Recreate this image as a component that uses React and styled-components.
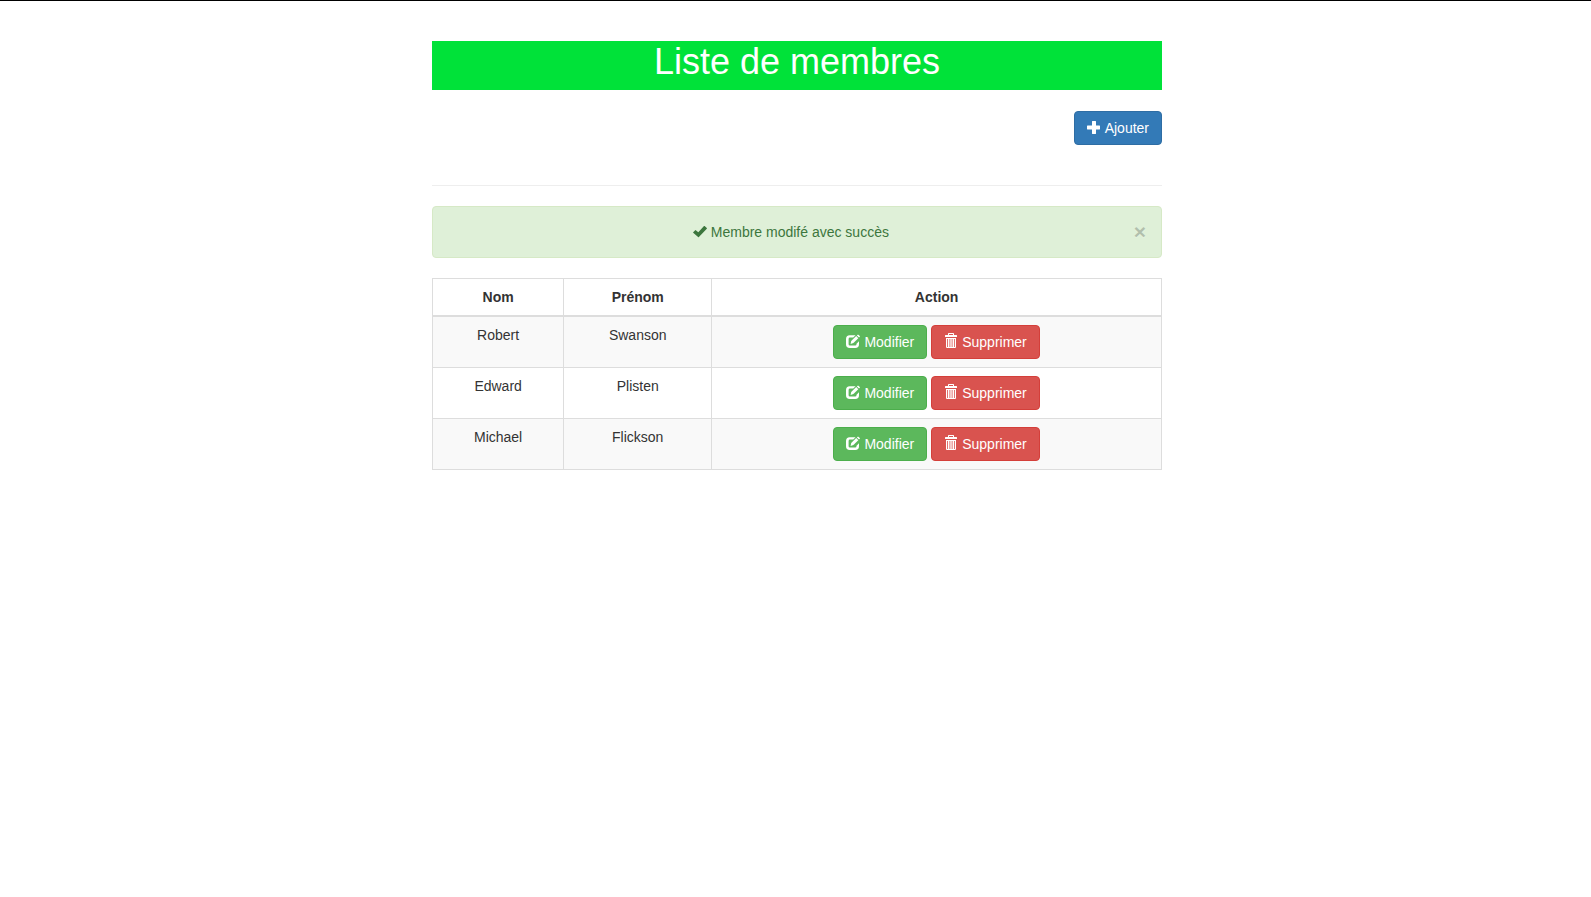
import React from "react";
import styled, { createGlobalStyle } from "styled-components";

const GlobalStyle = createGlobalStyle`
  *, *::before, *::after { box-sizing: border-box; }
  body {
    margin: 0;
    background: #fff;
    color: #333;
    font-family: "Liberation Sans", Arial, sans-serif;
    font-size: 14px;
    line-height: 20px;
  }
`;

const Page = styled.div`
  border-top: 1px solid #000;
  padding: 40px 0 40px 3px;
`;

const Container = styled.main`
  max-width: 730px;
  margin: 0 auto;
`;

const Title = styled.h1`
  margin: 0 0 21px;
  padding: 1px 0 8px;
  background: #00e239;
  color: #fff;
  font-size: 36px;
  font-weight: 400;
  line-height: 40px;
  text-align: center;
`;

const Toolbar = styled.div`
  display: flex;
  justify-content: flex-end;
  padding-bottom: 20px;
`;

const tones = {
  primary: ["#337ab7", "#2e6da4"],
  success: ["#5cb85c", "#4cae4c"],
  danger: ["#d9534f", "#d43f3a"],
};

const Button = styled.button`
  display: inline-flex;
  align-items: center;
  gap: 4px;
  padding: 6px 12px;
  border: 1px solid ${({ $tone }) => tones[$tone][1]};
  border-radius: 4px;
  background: ${({ $tone }) => tones[$tone][0]};
  color: #fff;
  font: inherit;
  white-space: nowrap;
  cursor: pointer;
`;

const Divider = styled.hr`
  margin: 20px 0;
  border: 0;
  border-top: 1px solid #eee;
`;

const Alert = styled.div`
  display: flex;
  align-items: center;
  margin-bottom: 20px;
  padding: 15px;
  border: 1px solid #d6e9c6;
  border-radius: 4px;
  background: #dff0d8;
  color: #3c763d;
`;

const Message = styled.span`
  flex: 1;
  display: flex;
  align-items: center;
  justify-content: center;
  gap: 4px;
`;

const Close = styled.button`
  padding: 0;
  border: 0;
  background: none;
  color: #000;
  font: inherit;
  font-size: 21px;
  font-weight: 700;
  line-height: 20px;
  text-shadow: 0 1px 0 #fff;
  opacity: 0.2;
  cursor: pointer;
`;

const Table = styled.table`
  width: 100%;
  border-collapse: collapse;
  text-align: center;
`;

const Col = styled.col`
  width: ${({ $width }) => $width};
`;

const HeadCell = styled.th`
  padding: 8px;
  border: 1px solid #ddd;
  border-bottom-width: 2px;
`;

const Row = styled.tr`
  &:nth-child(odd) { background: #f9f9f9; }
`;

const Cell = styled.td`
  padding: 8px;
  border: 1px solid #ddd;
  vertical-align: top;
`;

const Actions = styled.div`
  display: flex;
  justify-content: center;
  gap: 4px;
`;

const Glyph = styled.svg.attrs({ viewBox: "0 0 14 18", "aria-hidden": true })`
  width: 14px;
  height: 18px;
  flex: none;
  fill: currentColor;
`;

const PlusIcon = () => (
  <Glyph>
    <path d="M5 2.4q0-.4.4-.4h3.200q.4 0 .4.4V6.500h3.600q.4 0 .4.4v3.200q0 .4-.4.4H9v4.100q0 .4-.4.4H5.400q-.4 0-.4-.4V10.500H.4q-.4 0-.4-.4V6.900q0-.4.4-.4H5z" />
  </Glyph>
);

const CheckIcon = () => (
  <Glyph>
    <path d="M.2 9.200 2.200 7.200q.3-.3.600 0L5.300 9.300 11 3.100q.3-.3.600 0L13.800 5.100q.3.300 0 .600L5.900 14.100q-.4.400-.8 0L.2 9.800q-.3-.300 0-.600z" />
  </Glyph>
);

const EditIcon = () => (
  <Glyph>
    <path d="M9.600 2.200H3.800Q0 2.200 0 6v5.200Q0 15 3.800 15h5.400Q13 15 13 11.200V8.300l-2.500 2.500v.4q0 1.400-1.400 1.400H4q-1.400 0-1.400-1.400V6Q2.600 4.600 4 4.600h3.200z" />
    <path d="M5.200 8 10.200 3.100l2.100 2.100L7.400 10.100 4.600 10.900z" />
    <path d="M10.900 2.400 11.700 1.700q.3-.3.600 0l1.500 1.400q.3.300 0 .600L13 4.500z" />
  </Glyph>
);

const TrashIcon = () => (
  <Glyph>
    <path d="M4 2V.7Q4 0 4.700 0h4.600Q10 0 10 .7V2h2.400q.6 0 .6.600V4H1V2.600Q1 2 1.600 2zM5 2h4V1H5z" />
    <path fillRule="evenodd" d="M2 5h10v9q0 1-1 1H3q-1 0-1-1zM3.200 6v8h.8V6zM5.500 6v8h.8V6zM7.700 6v8h.8V6zM10 6v8h.8V6z" />
  </Glyph>
);

const members = [
  { nom: "Robert", prenom: "Swanson" },
  { nom: "Edward", prenom: "Plisten" },
  { nom: "Michael", prenom: "Flickson" },
];

export default function App() {
  return (
    <>
      <GlobalStyle />
      <Page>
        <Container>
          <Title>Liste de membres</Title>
          <Toolbar>
            <Button type="button" $tone="primary">
              <PlusIcon />
              Ajouter
            </Button>
          </Toolbar>
          <Divider />
          <Alert role="alert">
            <Message>
              <CheckIcon />
              Membre modifé avec succès
            </Message>
            <Close type="button" aria-label="Fermer">×</Close>
          </Alert>
          <Table>
            <colgroup>
              <Col $width="18%" />
              <Col $width="148px" />
              <Col />
            </colgroup>
            <thead>
              <tr>
                <HeadCell scope="col">Nom</HeadCell>
                <HeadCell scope="col">Prénom</HeadCell>
                <HeadCell scope="col">Action</HeadCell>
              </tr>
            </thead>
            <tbody>
              {members.map(({ nom, prenom }) => (
                <Row key={nom}>
                  <Cell>{nom}</Cell>
                  <Cell>{prenom}</Cell>
                  <Cell>
                    <Actions>
                      <Button type="button" $tone="success">
                        <EditIcon />
                        Modifier
                      </Button>
                      <Button type="button" $tone="danger">
                        <TrashIcon />
                        Supprimer
                      </Button>
                    </Actions>
                  </Cell>
                </Row>
              ))}
            </tbody>
          </Table>
        </Container>
      </Page>
    </>
  );
}
